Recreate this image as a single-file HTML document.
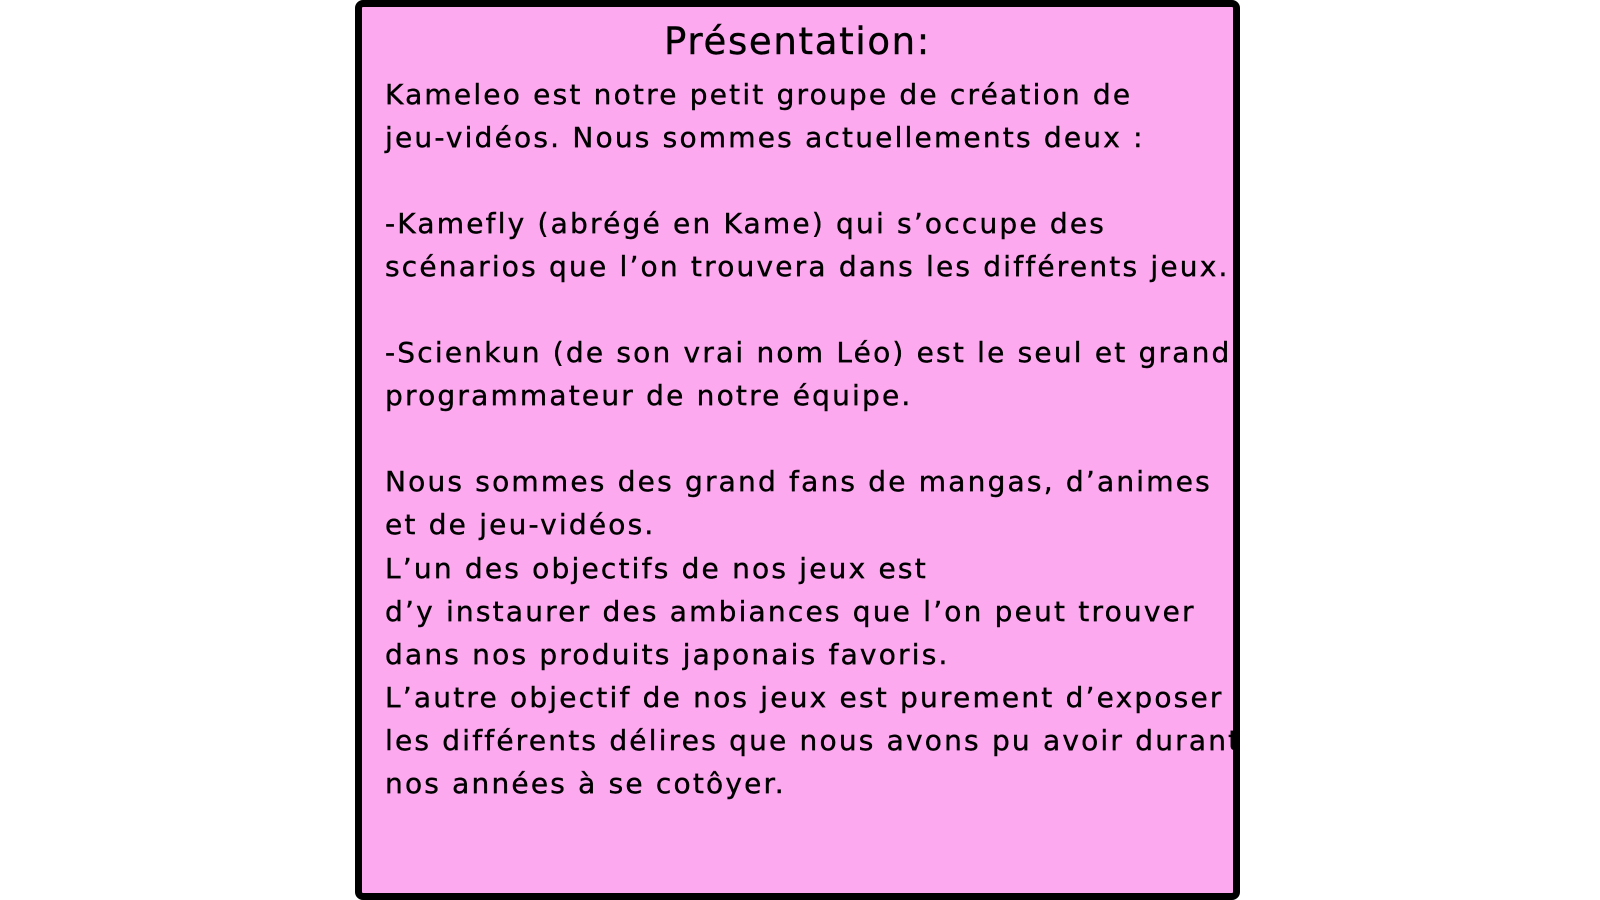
<!DOCTYPE html>
<html><head><meta charset="utf-8"><style>
html,body{margin:0;padding:0;background:#fff;width:1600px;height:900px;overflow:hidden}
.box{position:absolute;left:355px;top:0;width:871px;height:886px;background:#fda9ef;border:7px solid #000;border-radius:8px}
.t{position:absolute;left:0;right:0;top:12px;text-align:center;font-family:"DejaVu Sans","Liberation Sans",sans-serif;font-size:37px;line-height:46px;color:#000;letter-spacing:1.7px;-webkit-text-stroke:0.4px #000}
.p{position:absolute;left:23px;top:66px;font-family:"DejaVu Sans","Liberation Sans",sans-serif;font-size:28px;line-height:43.05px;color:#000;white-space:pre;letter-spacing:2.2px;-webkit-text-stroke:0.4px #000}
</style></head><body>
<div class="box">
<div class="t">Présentation:</div>
<div class="p">Kameleo est notre petit groupe de création de
jeu-vidéos. Nous sommes actuellements deux :

-Kamefly (abrégé en Kame) qui s’occupe des
scénarios que l’on trouvera dans les différents jeux.

-Scienkun (de son vrai nom Léo) est le seul et grand
programmateur de notre équipe.

Nous sommes des grand fans de mangas, d’animes
et de jeu-vidéos.
L’un des objectifs de nos jeux est
d’y instaurer des ambiances que l’on peut trouver
dans nos produits japonais favoris.
L’autre objectif de nos jeux est purement d’exposer
les différents délires que nous avons pu avoir durant
nos années à se cotôyer.</div>
</div>
</body></html>
